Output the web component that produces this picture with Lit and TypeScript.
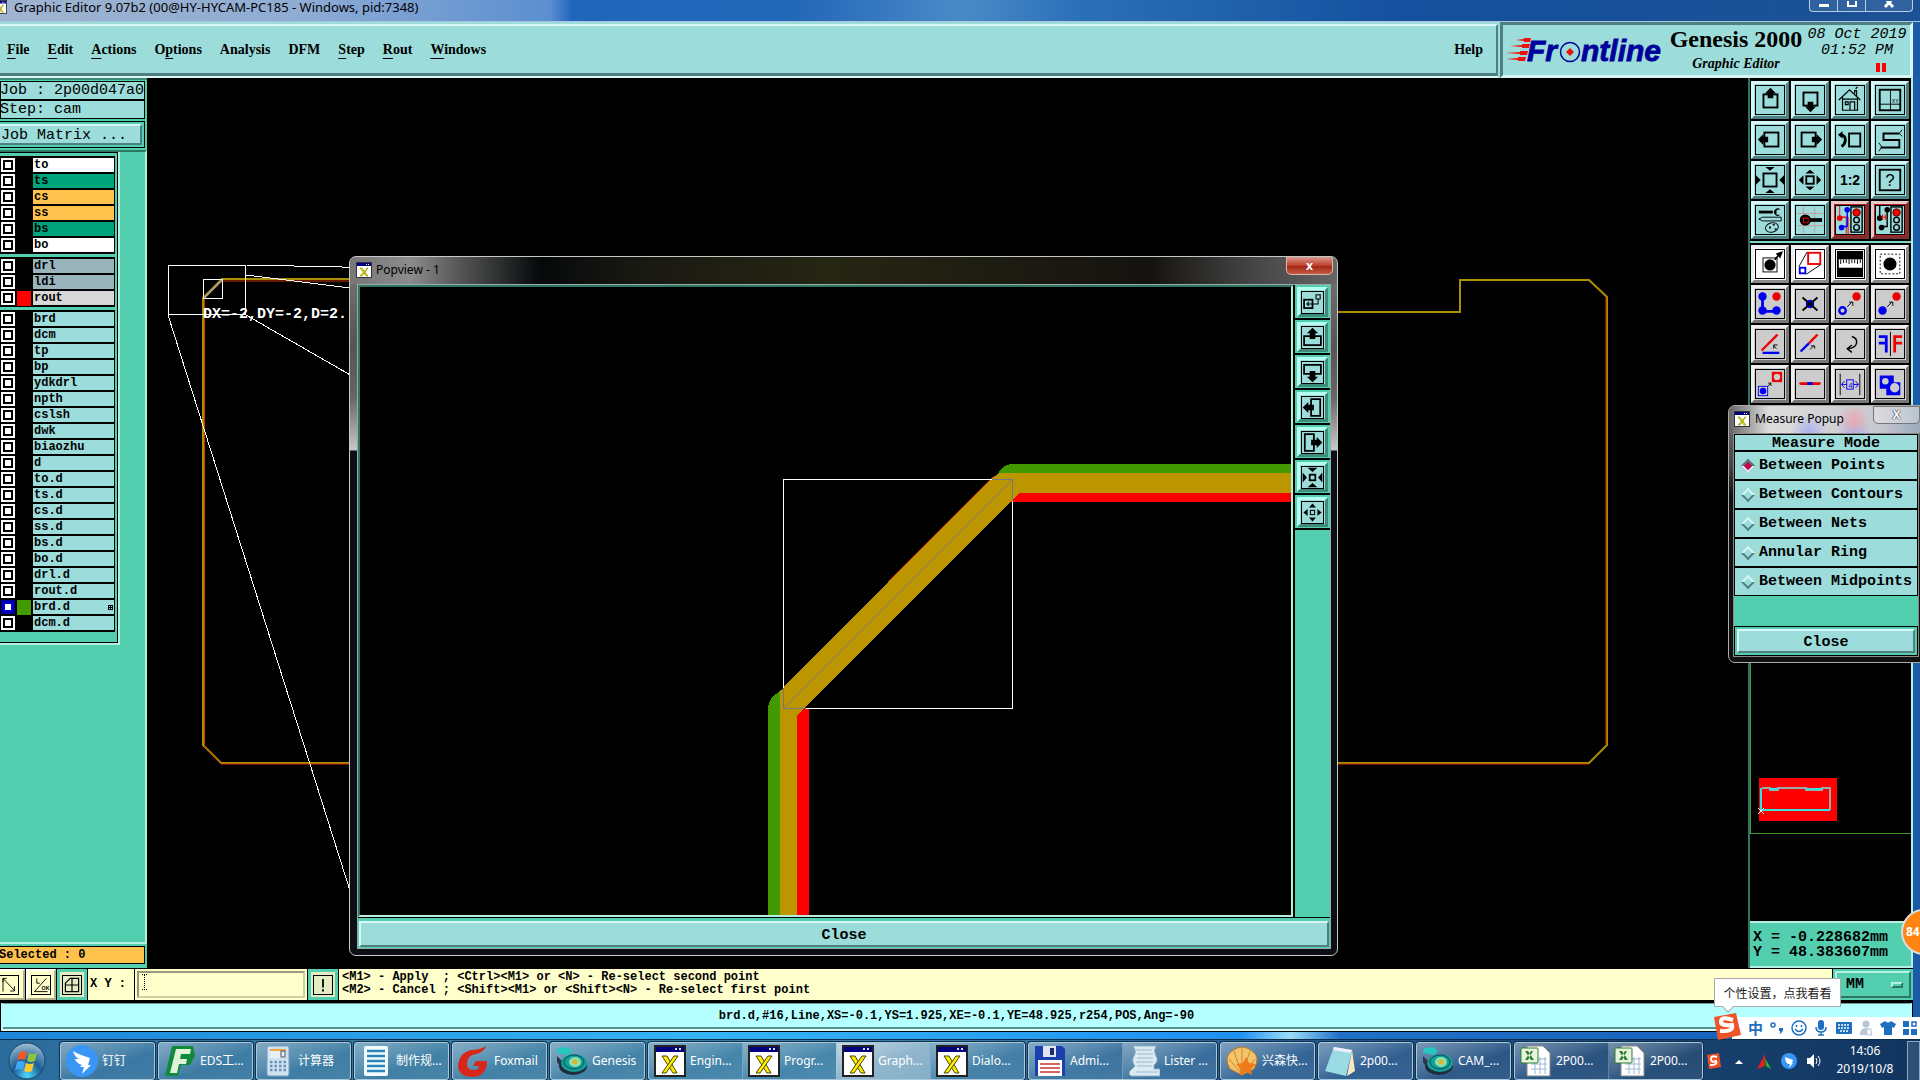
import { LitElement, html, svg, css, nothing } from "lit";
import { customElement, state } from "lit/decorators.js";
import { classMap } from "lit/directives/class-map.js";

const BLUE = "#0000f0";
const RED = "#f00000";

/* ---------- tool glyphs, all on a 30 x 30 grid ---------- */
const glyphs: Record<string, unknown> = {
  up: svg`<rect x="8" y="9" width="15" height="14" fill="none" stroke="#000" stroke-width="2"/><path d="M15.500 2l6 6h-3v5h-6v-5h-3z"/>`,
  down: svg`<rect x="8" y="7" width="15" height="14" fill="none" stroke="#000" stroke-width="2"/><path d="M15.500 28l6-6h-3v-5h-6v5h-3z"/>`,
  left: svg`<rect x="9" y="7" width="15" height="15" fill="none" stroke="#000" stroke-width="2"/><path d="M2 14.500l6-6v3h5v6h-5v3z"/>`,
  right: svg`<rect x="6" y="7" width="15" height="15" fill="none" stroke="#000" stroke-width="2"/><path d="M28 14.500l-6-6v3h-5v6h5v3z"/>`,
  home: svg`<path d="M3 15L14.500 4 26 15M7 12v14h16V12M7 14h16M15 26v-9h5v9M10 17h3v3h-3zM20 8V5h2v6M21 3l2-2" fill="none" stroke="#000" stroke-width="1.300"/>`,
  grid: svg`<rect x="4" y="4" width="22" height="22" fill="none" stroke="#000" stroke-width="2"/><path d="M15.500 4v22M4 19.500h22" stroke="#000" fill="none"/><text x="17" y="18" font-size="6" font-family="Liberation Mono">XY</text>`,
  undo: svg`<rect x="14" y="8" width="12" height="14" fill="none" stroke="#000" stroke-width="2"/><path d="M4 10q6-1 6 5 0 4-4 7" fill="none" stroke="#000" stroke-width="3"/><path d="M2 9.500l5-4v8z"/>`,
  snake: svg`<path d="M25 8H8v7h17v8H5" fill="none" stroke="#000" stroke-width="2"/><path d="M25 8l3-4M25 8l3 3M6 22l-3-4M6 23l-3 4" stroke="#000"/>`,
  fitIn: svg`<rect x="8" y="8" width="14" height="14" fill="none" stroke="#000" stroke-width="2"/><path d="M10 1h10l-5 4zM10 29h10l-5-4zM0 10v10l5-5zM30 10v10l-5-5z"/>`,
  fitOut: svg`<rect x="11" y="11" width="8" height="8" fill="none" stroke="#000" stroke-width="2"/><path d="M10 8h10l-5-4zM10 22h10l-5 4zM8 10v10l-5-5zM22 10v10l5-5z"/>`,
  ratio: svg`<text x="15" y="20" text-anchor="middle" font-size="15" font-weight="bold" font-family="Liberation Sans">1:2</text>`,
  help: svg`<rect x="4" y="4" width="22" height="22" fill="none" stroke="#000" stroke-width="2"/><text x="15" y="21" text-anchor="middle" font-size="18" font-family="Liberation Sans">?</text>`,
  tools: svg`<path d="M3 5h15v3H3z"/><path d="M26 3.500a4 4 0 1 0 0 6h-4v-5z"/><path d="M3 14l4-2h20v4H7z" fill="none" stroke="#000"/><ellipse cx="17" cy="23" rx="7" ry="5" transform="rotate(-15 17 23)" fill="none" stroke="#000"/><path d="M14 22h2v2h-2zM18 19h2v2h-2zM20 24h2v2h-2z"/>`,
  probe: svg`<path d="M8 1v28M20 1v28M1 8h28M1 21h28" stroke="#c99" /><circle cx="10" cy="15" r="6"/><path d="M14 13h14v4H14z"/><rect x="8" y="13" width="5" height="5" fill="none" stroke="${RED}"/>`,
  netA: svg`<path d="M4 0v12h7v18M4 12h9v18" stroke="${RED}" fill="none"/><path d="M12 3v19H6" stroke="${BLUE}" stroke-width="1.500" fill="none"/><circle cx="12" cy="4" r="3" fill="${BLUE}"/><circle cx="4" cy="13" r="3" fill="${RED}"/><circle cx="6" cy="23" r="3" fill="${BLUE}"/><rect x="16" y="1" width="12" height="27" fill="none" stroke="#000" stroke-width="1.500"/><circle cx="22" cy="7" r="4" fill="${RED}" stroke="#600"/><circle cx="22" cy="15" r="3" fill="none" stroke="#000" stroke-width="1.500"/><circle cx="22" cy="23" r="3" fill="none" stroke="#000" stroke-width="1.500"/>`,
  netB: svg`<path d="M4 0v13M12 4v18H6" stroke="#000" fill="none" stroke-width="1.500"/><circle cx="12" cy="4" r="3"/><circle cx="4" cy="13" r="3"/><circle cx="6" cy="23" r="3"/><path d="M5 12h7M7 9v6M10 9v6" stroke="${RED}" fill="none"/><rect x="16" y="1" width="12" height="27" fill="none" stroke="#000" stroke-width="1.500"/><circle cx="22" cy="7" r="4" fill="${RED}" stroke="#600"/><circle cx="22" cy="15" r="3" fill="none" stroke="#000" stroke-width="1.500"/><circle cx="22" cy="23" r="3" fill="none" stroke="#000" stroke-width="1.500"/>`,
  select: svg`<rect x="7.500" y="8.500" width="15" height="15" fill="none" stroke="#000"/><circle cx="15" cy="16" r="6"/><path d="M19 10l4-4-2-2 8-3-3 8-2-2-3 4z"/>`,
  scale: svg`<rect x="13" y="3" width="13" height="12" fill="none" stroke="${RED}" stroke-width="2"/><rect x="4" y="19" width="6" height="6" fill="none" stroke="${BLUE}" stroke-width="2"/><path d="M3 18L12 2M11 26l15-10" stroke="#000"/>`,
  ruler: svg`<rect x="1" y="1" width="28" height="28"/><rect x="3" y="10" width="25" height="9" fill="#fff"/><path d="M5 10v5M8 10v4M11 10v4M14 10v5M17 10v4M20 10v4M23 10v5M26 10v4" stroke="#000"/>`,
  area: svg`<circle cx="15" cy="15" r="7"/><rect x="4.500" y="4.500" width="21" height="21" fill="none" stroke="#000" stroke-dasharray="2 2"/>`,
  pads: svg`<path d="M7 7v16h15" fill="none" stroke="${BLUE}" stroke-width="3"/><circle cx="7" cy="7" r="4.500" fill="${BLUE}"/><circle cx="7" cy="22" r="4.500" fill="${BLUE}"/><circle cx="22" cy="22" r="4.500" fill="${BLUE}"/><circle cx="22" cy="7" r="4.500" fill="${RED}"/>`,
  cross: svg`<circle cx="15" cy="15" r="4.500" fill="${BLUE}"/><path d="M7 8l16 14M23 8L7 22" stroke="#000" stroke-width="2"/>`,
  moveA: svg`<circle cx="7" cy="22" r="3.500" fill="none" stroke="${BLUE}" stroke-width="2.500"/><circle cx="22" cy="7" r="4.500" fill="${RED}"/><path d="M12 18l5-5M14 13h4v4" stroke="#000" fill="none"/>`,
  moveB: svg`<circle cx="7" cy="22" r="4.500" fill="${BLUE}"/><circle cx="22" cy="7" r="4.500" fill="${RED}"/><path d="M12 18l5-5M14 13h4v4" stroke="#000" fill="none"/>`,
  angle: svg`<path d="M6 22L23 5" stroke="${RED}" stroke-width="2.500"/><path d="M7 24.500h18" stroke="${BLUE}" stroke-width="2.500"/><path d="M22 20l-3-3M19 20v-4h4" stroke="#000" fill="none"/>`,
  extend: svg`<path d="M14 14l9-9" stroke="${RED}" stroke-width="2.500"/><path d="M5 23l9-9" stroke="${BLUE}" stroke-width="2.500"/><path d="M15 21l4-4M16 17h4v3" stroke="#000" fill="none"/>`,
  rotate: svg`<path d="M17 7q6 2 5 7-1 5-9 6M17 16l-5 4 5 4" stroke="#000" stroke-width="1.500" fill="none"/>`,
  mirror: svg`<path d="M3 7h8v17M3 14h8" stroke="${BLUE}" stroke-width="3" fill="none"/><path d="M28 7h-8v17M28 14h-8" stroke="${RED}" stroke-width="3" fill="none"/><path d="M15.500 2v26" stroke="#000"/>`,
  copy: svg`<rect x="2.500" y="17.500" width="10" height="10" fill="none" stroke="${BLUE}"/><circle cx="7.500" cy="22.500" r="3.500" fill="${BLUE}"/><rect x="17" y="2" width="11" height="11" fill="${RED}"/><circle cx="22.500" cy="7.500" r="3.500" fill="#ccc"/><path d="M13 17l3-3M13 14h3v3" stroke="#000" fill="none"/>`,
  bar: svg`<path d="M5 14.500h20" stroke="${RED}" stroke-width="3" stroke-linecap="round"/><path d="M12 14.500h6" stroke="${BLUE}" stroke-width="3"/>`,
  spacing: svg`<path d="M4.500 4v23M25.500 4v23" stroke="#000"/><path d="M6 15.500h18M9 12l-3 3.500 3 3.500M21 12l3 3.500-3 3.500" stroke="${BLUE}" fill="none"/><rect x="11.500" y="10.500" width="7" height="10" fill="#ccc" stroke="${BLUE}"/><text x="13" y="19" font-size="8" fill="${BLUE}" font-family="Liberation Sans">4</text>`,
  merge: svg`<path d="M4 6h15v7h7v14H11v-7H4z" fill="${BLUE}"/><circle cx="10" cy="12" r="3.500" fill="#ccc"/><circle cx="20" cy="19" r="5" fill="#ccc"/>`,
  popLink: svg`<rect x="3" y="11" width="12" height="12" fill="none" stroke="#000" stroke-width="2.500"/><rect x="20" y="4" width="6" height="6" fill="none" stroke="#000" stroke-width="1.500"/><path d="M7 17h16v-7M10 14l-3 3 3 3" stroke="#000" stroke-width="1.500" fill="none"/>`,
  popUp: svg`<path d="M12 13H3v13h24V13h-9" fill="none" stroke="#000" stroke-width="2.500"/><path d="M15 1l8 8h-4v8h-8V9H7z"/>`,
  popDown: svg`<path d="M12 17H3V4h24v13h-9" fill="none" stroke="#000" stroke-width="2.500"/><path d="M15 29l8-8h-4v-8h-8v8H7z"/>`,
  popLeft: svg`<path d="M13 12V3h13v24H13v-9" fill="none" stroke="#000" stroke-width="2.500"/><path d="M1 15l8-8v4h8v8H9v4z"/>`,
  popRight: svg`<path d="M17 12V3H4v24h13v-9" fill="none" stroke="#000" stroke-width="2.500"/><path d="M29 15l-8-8v4h-8v8h8v4z"/>`,
  popIn: svg`<rect x="11" y="11" width="8" height="8" fill="none" stroke="#000" stroke-width="2.500"/><path d="M8 1h14l-7 6zM8 29h14l-7-6zM1 8v14l6-7zM29 8v14l-6-7z"/>`,
  popOut: svg`<rect x="12" y="12" width="6" height="6" fill="none" stroke="#000" stroke-width="1.500"/><path d="M10 8h10l-5-6zM10 22h10l-5 6zM8 10v10l-6-5zM22 10v10l6-5z"/>`,
  arrow2: svg`<path d="M5 4v22M5 4h6M6 5l18 19M24 17v8h-7M5 4v6" fill="none" stroke="#000" stroke-width="1.500"/>`,
  angleOk: svg`<path d="M4 26h22M4 26L24 4M8 4v8h5" fill="none" stroke="#000" stroke-width="1.500"/><text x="16" y="24" font-size="9" font-family="Liberation Sans">OK</text>`,
  window: svg`<path d="M4 12L12 4h14v22H4zM4 15h22M15 4v22" fill="none" stroke="#000" stroke-width="2"/>`,
  alert: svg`<path d="M15 5v14M15 22v4" stroke="#000" stroke-width="3"/>`,
};

const glyph = (name: string) =>
  html`<svg class="glyph" viewBox="0 0 30 30" aria-hidden="true">${glyphs[name]}</svg>`;

const xIcon = html`<svg class="xicon" viewBox="0 0 16 16" aria-hidden="true">
  <rect x="0.500" y="0.500" width="15" height="15" fill="#fff" stroke="#333" />
  <rect x="1" y="1" width="14" height="3" fill="#000080" /><path d="M10 2h1v1h-1zM12 2h1v1h-1z" fill="#fff" />
  <path d="M4 6h2l6 8h-2z" fill="#ee0" stroke="#660" stroke-width="0.500" /><path d="M12 6h-1l-7 8h2z" fill="#ee0" stroke="#660" stroke-width="0.500" />
</svg>`;

const upperTools = [
  "up", "down", "home", "grid", "left", "right", "undo", "snake",
  "fitIn", "fitOut", "ratio", "help", "tools", "probe", "netA", "netB",
];
const lowerTools = [
  "select", "scale", "ruler", "area", "pads", "cross", "moveA", "moveB",
  "angle", "extend", "rotate", "mirror", "copy", "bar", "spacing", "merge",
];

interface Layer { name: string; tone: string; swatch?: string; active?: boolean }
const layerGroups: Layer[][] = [
  [
    { name: "to", tone: "white" }, { name: "ts", tone: "green" }, { name: "cs", tone: "amber" },
    { name: "ss", tone: "amber" }, { name: "bs", tone: "green" }, { name: "bo", tone: "white" },
  ],
  [
    { name: "drl", tone: "slate" }, { name: "ldi", tone: "slate" }, { name: "rout", tone: "silver", swatch: "red" },
  ],
  [
    "brd", "dcm", "tp", "bp", "ydkdrl", "npth", "cslsh", "dwk", "biaozhu", "d", "to.d", "ts.d", "cs.d",
    "ss.d", "bs.d", "bo.d", "drl.d", "rout.d", "brd.d", "dcm.d",
  ].map((name) => ({
    name, tone: "aqua", swatch: name === "brd.d" ? "lime" : undefined, active: name === "brd.d",
  })),
];

/* ---------- taskbar pictures, 32 x 32 grid ---------- */
const appIcons: Record<string, unknown> = {
  ding: svg`<circle cx="16" cy="16" r="16" fill="#3a96f4"/><path d="M7 6q4 3 17 7l-2 7h3l-9 9 2-7h-4l2-2q-6-2-7-6l4 0q-5-3-6-8z" fill="#fff"/>`,
  eds: svg`<path d="M8 1h21l2 10-5 9H17l-3 11H1z" fill="#118a3c"/><path d="M12 4h15l-1 5h-9l-1 5h7l-1 5h-7l-2 9H6z" fill="#dff3d8"/>`,
  calc: svg`<rect x="5" y="1" width="22" height="30" rx="2" fill="#cfe2f2" stroke="#7d9ab5"/><rect x="8" y="4" width="16" height="9" fill="#e8eef4"/><path d="M8 5h16" stroke="#f4a63b" stroke-width="2"/><rect x="19" y="6" width="4" height="6" fill="none" stroke="#456"/><path d="M8 17h16M8 21h16M8 25h16" stroke="#6a8fb8" stroke-width="2.500" stroke-dasharray="2.500 2"/>`,
  note: svg`<rect x="4" y="1" width="24" height="30" rx="2" fill="#f4fbff"/><path d="M7 6h18M7 11h18M7 16h18M7 21h18M7 26h18" stroke="#2a86b8" stroke-width="2.500"/>`,
  fox: svg`<path d="M28 1q-2 7-14 9-5 3-5 9 0 6 7 6 5 0 5-4h-6l3-5h11q0 15-14 16-14 0-15-11Q1 8 13 5q9 0 15-4z" fill="#d9261a"/>`,
  genesis: svg`<ellipse cx="17" cy="21" rx="14" ry="9" fill="#222b3a"/><ellipse cx="18" cy="18" rx="13" ry="9" fill="#12a098"/><ellipse cx="18" cy="17" rx="10" ry="7" fill="none" stroke="#064f58"/><ellipse cx="19" cy="17" rx="6" ry="5" fill="#8be0b0"/><circle cx="19" cy="17" r="2.500" fill="#e2b227"/><path d="M2 3l9-1 5 4-4 4-11-2z" fill="#25c8c0"/><path d="M1 11l5 5-3 4-2-3z" fill="#334"/>`,
  xwin: svg`<rect x="1" y="1" width="30" height="30" fill="#fff" stroke="#222" stroke-width="2"/><rect x="2" y="2" width="28" height="5" fill="#000080"/><path d="M21 3h2v2h-2zM25 3h2v2h-2z" fill="#ddd"/><path d="M8 11h5l10 17h-4z" fill="#fe0" stroke="#440"/><path d="M24 11h-4L8 28h4z" fill="#fe0" stroke="#440"/>`,
  floppy: svg`<path d="M1 1h27l3 3v27H1z" fill="#1c3fb0"/><rect x="9" y="1" width="13" height="11" fill="#dfe5ef"/><rect x="16" y="3" width="4" height="7" fill="#1c2a70"/><rect x="4" y="15" width="24" height="16" fill="#fff"/><path d="M6 19h20M6 23h20M6 27h20" stroke="#c33" stroke-width="1.500"/>`,
  scroll: svg`<path d="M5 1h23q-3 5 0 10t-2 9v4h6v7H3q-4-3 1-7l3-3q-4-5-1-10t-1-10z" fill="#dcebf3" stroke="#8fb0c4"/><path d="M8 5h16M9 9h16M9 13h16M8 17h17M9 21h15M8 27h22" stroke="#98b9cc"/>`,
  shell: svg`<path d="M16 30L4 24Q-3 12 6 6q10-8 20 0 9 6 2 18z" fill="#f4c46a" stroke="#b9762a"/><path d="M16 30L8 6M16 30L16 3M16 30L24 6M16 30L3 14M16 30L29 14" stroke="#c98a35"/><path d="M20 12l3 6 7 1-5 5 1 6-6-3-6 3 1-6-5-5 7-1z" fill="#ef7a1c"/>`,
  pad: svg`<path d="M28 5l3 21-8 5z" fill="#f4e9c0"/><path d="M10 2l18 3-6 26L1 26z" fill="#9adbe4"/><path d="M10 2l18 3-1 3L9 5z" fill="#eef"/>`,
  excel: svg`<path d="M7 1h16l7 7v23H7z" fill="#fff" stroke="#888"/><path d="M11 14h16M11 19h16M11 24h16M15 12v17M20 12v17M25 12v17" stroke="#9ab6d8"/><rect x="1" y="3" width="17" height="15" rx="1" fill="#e6f4dc" stroke="#2f7d32"/><path d="M5 6h3l6 9h-3zM13 6h-2l-6 9h3z" fill="#2a7d2e"/>`,
};

interface Task { icon: string; label: string; current?: boolean }
const taskGroups: Task[][] = [
  [{ icon: "ding", label: "钉钉" }],
  [{ icon: "eds", label: "EDS工..." }],
  [{ icon: "calc", label: "计算器" }],
  [{ icon: "note", label: "制作规..." }],
  [{ icon: "fox", label: "Foxmail" }],
  [{ icon: "genesis", label: "Genesis" }],
  [
    { icon: "xwin", label: "Engin..." }, { icon: "xwin", label: "Progr..." },
    { icon: "xwin", label: "Graph...", current: true }, { icon: "xwin", label: "Dialo..." },
  ],
  [{ icon: "floppy", label: "Admi..." }, { icon: "scroll", label: "Lister ..." }],
  [{ icon: "shell", label: "兴森快..." }],
  [{ icon: "pad", label: "2p00..." }],
  [{ icon: "genesis", label: "CAM_..." }],
  [{ icon: "excel", label: "2P00..." }, { icon: "excel", label: "2P00..." }],
];

const base = css`
  :host { display: block; box-sizing: border-box; }
  *, *::before, *::after { box-sizing: border-box; }
  button, input, select { font: inherit; color: inherit; margin: 0; padding: 0; border-radius: 0; }
  .glyph { display: block; width: 100%; height: 100%; }
  .xicon { width: 16px; height: 16px; flex: none; }
  .mono { font: bold 15px/15px "Liberation Mono", monospace; }
`;

@customElement("menu-header")
class MenuHeader extends LitElement {
  static styles = [base, css`
    :host { display: flex; height: 56px; color: #000; background: #9cdcda; }
    .menu { flex: 1; display: flex; align-items: center; justify-content: space-between; padding: 0 13px 0 7px;
      border: 2px solid; border-color: #d8f6f6 #4f7f80 #4f7f80 #9cdcda; border-left-width: 0; border-bottom-width: 3px;
      box-shadow: 0 2px #d8f6f6; margin-bottom: 2px; margin-top: 2px;
      font: bold 14px/20px "Liberation Serif", serif; }
    .items { display: flex; gap: 18px; }
    .menu button { border: 0; background: none; white-space: pre; }
    u { text-underline-offset: 4px; text-decoration-thickness: 1px; }
    .brand { display: flex; width: 413px; border: 3px solid; border-color: #4f7f80 #d8f6f6 #d8f6f6 #4f7f80;
      margin-left: 2px; padding-left: 3px; }
    .logo { width: 162px; height: 50px; flex: none; }
    .product { display: flex; flex-direction: column; align-items: center; width: 136px; white-space: nowrap; }
    .product strong { font: bold 24px/28px "Liberation Serif", serif; }
    .product em { font: italic bold 14px/22px "Liberation Serif", serif; }
    .clock { flex: 1; display: flex; flex-direction: column; align-items: center; padding-top: 2px;
      font: italic 15px/16px "Liberation Mono", monospace; white-space: pre; }
    .pause { width: 10px; height: 9px; border: solid #f00; border-width: 0 4px; margin: 4px 0 0 48px; }
  `];
  render() {
    const items: [string, string, string][] = [
      ["", "F", "ile"], ["", "E", "dit"], ["", "A", "ctions"], ["O", "p", "tions"], ["Analysis", "", ""],
      ["DFM", "", ""], ["", "S", "tep"], ["", "R", "out"], ["", "W", "indows"],
    ];
    return html`
      <nav class="menu">
        <div class="items">
          ${items.map(([a, k, b]) => html`<button type="button">${a}${k ? html`<u>${k}</u>` : nothing}${b}</button>`)}
        </div>
        <button type="button">Help</button>
      </nav>
      <div class="brand">
        <svg class="logo" viewBox="0 0 162 50" role="img" aria-label="Frontline">
          <path d="M10 15l8-1v-1h7l-1 4h-6v-1zM4 21l12-1v-1h8l-1 4h-7v-1zM0 28l14-1v-1h8l-1 4h-7v-1zM0 34l12-1v-1h8l-1 4h-7v-1z" fill="#f01010" />
          <g font-family="Liberation Sans" font-weight="bold" font-style="italic" font-size="30" fill="#00009a" stroke="#00009a" stroke-width="0.800">
            <text x="21" y="36">Fr</text><text x="75" y="36">ntline</text>
          </g>
          <circle cx="64" cy="27" r="9.500" fill="#9cdcda" stroke="#00009a" stroke-width="1.500" />
          <path d="M64 23l4 4-4 4-4-4z" fill="#f01010" />
        </svg>
        <div class="product"><strong>Genesis 2000</strong><em>Graphic Editor</em></div>
        <div class="clock"><span>08 Oct 2019</span><span>01:52 PM</span><i class="pause"></i></div>
      </div>`;
  }
}

@customElement("layer-panel")
class LayerPanel extends LitElement {
  static styles = [base, css`
    :host { display: flex; flex-direction: column; width: 147px; background: #53cfb0; color: #000; }
    .info { border: 1px solid #000; background: #9cdcda; height: 19px; margin-right: 2px; line-height: 18px; white-space: pre; text-indent: -1px; overflow: hidden; }
    .head { border-top: 2px solid #3a8a76; background: #53cfb0; padding-top: 1px; font-weight: normal; }
    .matrix { margin: 2px 2px 2px 0; border: 1px solid #000; border-left: 0; height: 27px; padding: 2px 2px 2px 0; }
    .matrix button { width: 100%; height: 100%; background: #9cdcda; border: 2px solid; border-left: 0;
      border-color: #d8f6f6 #4f7f80 #4f7f80; text-align: left; padding: 2px 0 0 1px; }
    .body { flex: 1; border-right: 2px solid #b4efe0; border-bottom: 2px solid #b4efe0; border-top: 2px solid #2e7564; }
    .list { width: 120px; border-right: 2px solid #b4efe0; border-bottom: 2px solid #b4efe0; }
    .inner { display: flex; flex-direction: column; gap: 3px; padding: 3px 2px 10px 0; border: solid #000; border-width: 1px 1px 1px 0; }
    .group { background: #000; padding: 1px 0 1px 1px; }
    .row { display: grid; grid-template-columns: 14px 14px 81px; gap: 2px; height: 16px; padding-top: 1px;
      font: bold 12px/14px "Liberation Mono", monospace; }
    input { appearance: none; width: 14px; height: 14px; border: 2px solid #fff; background: #fff; box-shadow: inset 0 0 0 2px #000; }
    .active input { border-color: #0000a0; box-shadow: inset 0 0 0 2px #0000d0; }
    .name { display: flex; justify-content: space-between; align-items: center; height: 14px; padding: 0 1px; background: #9cdcda; }
    .white { background: #fff; } .green { background: #00a47c; } .amber { background: #ffc34d; }
    .slate { background: #9ab4bc; } .silver { background: #d8d8d8; }
    .red { background: #f00; } .lime { background: #429a00; }
    .mark { width: 5px; height: 5px; }
    .foot { padding: 2px 2px 4px 0; background: #53cfb0; }
    .sel { border: 1px solid #000; border-left: 0; background: #ffc34d; height: 18px; text-indent: -1px;
      font: bold 12px/16px "Liberation Mono", monospace; white-space: pre; }
  `];
  render() {
    return html`
      <div class="head mono">
        <div class="info">Job : 2p00d047a0</div>
        <div class="info">Step: cam</div>
        <div class="matrix"><button type="button">Job Matrix ...</button></div>
      </div>
      <div class="body"><div class="list"><div class="inner">
        ${layerGroups.map((g) => html`<div class="group">${g.map((l) => html`
          <label class=${classMap({ row: true, active: !!l.active })}>
            <input type="checkbox" .checked=${!!l.active} />
            <i class=${l.swatch ?? ""}></i>
            <span class="name ${l.tone}">${l.name}${l.active
              ? html`<svg class="mark" viewBox="0 0 5 5" shape-rendering="crispEdges"><path d="M0 0h5v5H0zM1 1v1h1V1zM3 1v1h1V1zM1 3v1h1V3zM3 3v1h1V3z" fill-rule="evenodd" /></svg>`
              : nothing}</span>
          </label>`)}</div>`)}
      </div></div></div>
      <div class="foot"><div class="sel">Selected : 0</div></div>`;
  }
}

@customElement("tool-column")
class ToolColumn extends LitElement {
  static styles = [base, css`
    :host { display: flex; flex-direction: column; width: 165px; background: #000; border-left: 2px solid #2e7564; border-right: 2px solid #b4efe0; color: #000; }
    .tools { display: grid; grid-template-columns: repeat(4, 38px); gap: 2px; padding: 3px 0 2px 1px; }
    .tools.lower { padding-top: 2px; }
    .upper { border-bottom: 2px solid #7fd8c4; }
    .tool { width: 38px; height: 38px; padding: 1px; border: 3px solid; border-color: #d8f6f6 #4f7f80 #4f7f80 #d8f6f6; background: #9cdcda; }
    .box { display: block; width: 30px; height: 30px; border: 1px solid #000; }
    .lower .tool { background: #ccc; border-color: #eee #777 #777 #eee; }
    .lower .lit { background: #fff; border-color: #eee #888 #888 #eee; }
    .upper .hot { background: #b82020; border-color: #e8c8c8 #7f3030 #7f3030 #e8c8c8; }
    .hot .box { background: #9cdcda; }
    .map { flex: 1; }
    .map svg { display: block; width: 100%; height: 100%; }
    .coords { border: solid; border-width: 2px 0 2px; border-color: #b4efe0; background: #53cfb0; padding: 7px 0 6px 3px; white-space: pre; }
    .coords div { line-height: 15px; }
  `];
  render() {
    const tool = (n: string, cls: Record<string, boolean>) =>
      html`<button type="button" aria-label=${n} class=${classMap({ tool: true, ...cls })}><span class="box">${glyph(n)}</span></button>`;
    return html`
      <div class="tools upper">${upperTools.map((n, i) => tool(n, { hot: i > 13 }))}</div>
      <div class="tools lower">${lowerTools.map((n, i) => tool(n, { lit: i < 4 }))}</div>
      <div class="map">
        <svg viewBox="0 0 161 516" preserveAspectRatio="xMinYMin meet" shape-rendering="crispEdges">
          <path d="M0.500 0V428.500H161" fill="none" stroke="#429a30" />
          <rect x="9" y="373" width="78" height="43" fill="#f00" />
          <path d="M12 383h8v2h8v-2h28v2h16v-2h8v22" fill="none" stroke="#9aa" stroke-width="2" />
          <path d="M11 383v22h69M20 384h8M56 384h16" fill="none" stroke="#38e0e0" stroke-width="2" />
          <path d="M8 403l6 6M14 403l-6 6" stroke="#fff" />
        </svg>
      </div>
      <div class="coords mono"><div>X = -0.228682mm</div><div>Y = 48.383607mm</div></div>`;
  }
}

@customElement("pop-view")
class PopView extends LitElement {
  static styles = [base, css`
    :host { display: flex; flex-direction: column; width: 989px; height: 700px; padding: 0 6px 6px 7px; overflow: hidden;
      border: 1px solid #c8c8c8; border-radius: 7px; color: #000;
      background: linear-gradient(#777 0, #555 90px, #666 140px, #c8c8c8 193px, #0c1016 194px); }
    .title { display: flex; align-items: flex-start; gap: 4px; height: 27px; margin: 0 -6px 0 -7px; padding: 5px 4px 0 6px; border-radius: 6px 6px 0 0;
      background: linear-gradient(90deg, #777, #8c8c8c 60px, #555 110px, #05090a 190px, #181812 280px, #262614 480px, #15130f 800px, #444 900px, #666);
      font: 12px/16px "Noto Sans", "Noto Sans CJK SC", sans-serif; }
    .title span { flex: 1; }
    .close { width: 47px; height: 19px; margin-top: -6px; border: 1px solid #d8b8b0; border-radius: 0 0 5px 5px; color: #fff;
      background: linear-gradient(#d89a90, #c0402c 50%, #a02818 55%, #c85a40); font-weight: bold; line-height: 14px; }
    .client { flex: 1; display: flex; flex-direction: column; border: 1px solid #9aa; background: #000; min-height: 0; }
    .view { flex: 1; display: flex; min-height: 0; }
    .canvas { flex: 1; border: 2px solid; border-color: #2e7564 #b4efe0 #b4efe0 #2e7564; min-width: 0; }
    .canvas svg { display: block; width: 100%; height: 100%; }
    .side { width: 35px; margin-left: 2px; background: #53cfb0; }
    .cell { border-bottom: 2px solid #000; height: 35px; padding: 2px 0 0 2px; }
    .cell button { display: block; width: 31px; height: 30px; padding: 1px 1px 0; border: 3px solid; background: #9cdcda; border-color: #b4fff0 #3d8c7c #3d8c7c #b4fff0; }
    .box { display: block; width: 23px; height: 23px; border: 1px solid #000; }
    .foot { padding: 3px 1px 1px 1px; background: #53cfb0; margin-top: 1px; }
    .foot button { display: block; width: 100%; height: 26px; padding-top: 2px; background: #9cdcda; border: 2px solid; border-color: #d8f6f6 #4f7f80 #4f7f80 #d8f6f6; }
  `];
  render() {
    return html`
      <div class="title">${xIcon}<span>Popview - 1</span><button class="close" type="button" aria-label="Close window">x</button></div>
      <div class="client">
        <div class="view">
          <div class="canvas">
            <svg viewBox="360 287 931 628" preserveAspectRatio="xMinYMin slice" shape-rendering="crispEdges">
              <path d="M768 916V710q0-11 8-16l10-8 8 20v210z" fill="#429a00" />
              <path d="M1292 464H1013q-9 0-14 8l-6 8 20 10h279z" fill="#429a00" />
              <path d="M797 916V708h12V916zM1006 502V493h286v9z" fill="#f00" />
              <path d="M780 916V692L783 688 992 478 1000 473H1292v20H1019L797 715V916z" fill="#bc9600" />
              <path d="M888 582L993 477" stroke="#e03000" />
              <rect x="783.500" y="479.500" width="229" height="229" fill="none" stroke="#fff" />
              <path d="M783.500 688v20.500h22M992 479.500h20.500V501M783.500 708.500l229-229" fill="none" stroke="#77777f" />
            </svg>
          </div>
          <div class="side">
            ${["popLink", "popUp", "popDown", "popLeft", "popRight", "popIn", "popOut"].map((n) => html`
              <div class="cell"><button type="button" aria-label=${n}><span class="box">${glyph(n)}</span></button></div>`)}
          </div>
        </div>
        <div class="foot mono"><button type="button">Close</button></div>
      </div>`;
  }
}

@customElement("measure-popup")
class MeasurePopup extends LitElement {
  @state() private mode = 0;
  static styles = [base, css`
    :host { display: flex; flex-direction: column; width: 193px; height: 258px; padding: 0 1px 5px 4px; color: #000;
      border: 1px solid #aaa; border-radius: 7px 0 0 7px;
      background: linear-gradient(#777 0, #444 60px, #111 90px, #111); }
    .title { display: flex; gap: 5px; height: 27px; margin: 0 -1px 0 -4px; padding: 5px 0 0 5px; border-radius: 6px 0 0;
      background: radial-gradient(circle at 80px 26px, #a8b0f0 0, transparent 18px), radial-gradient(circle at 125px 14px, #e8a8b0 0, transparent 16px),
        radial-gradient(circle at 125px 28px, #a8b0f0 0, transparent 18px), linear-gradient(90deg, #666, #ddd 40px, #c8c8d0 150px, #9ab);
      font: 12px/16px "Noto Sans", sans-serif; white-space: nowrap; }
    .title span { flex: 1; }
    .x { width: 47px; height: 18px; margin-top: -5px; border: 1px solid #777; border-radius: 0 0 5px 5px; background: #ffffff50; color: #fff; font-weight: bold; line-height: 14px; text-shadow: 0 0 1px #000, 0 0 1px #000; }
    .client { flex: 1; display: flex; flex-direction: column; border: 1px solid #888; background: #53cfb0; }
    .list { background: #000; padding: 1px; margin: 0; border: 0; display: flex; flex-direction: column; gap: 2px; }
    .head { background: #9cdcda; text-align: center; height: 15px; line-height: 17px; }
    label { display: flex; align-items: center; gap: 6px; height: 27px; padding-left: 8px; background: #9cdcda; white-space: pre; }
    input { appearance: none; flex: none; width: 10px; height: 10px; transform: rotate(45deg); border: 2px solid;
      border-color: #d8f6f6 #4f7f80 #4f7f80 #d8f6f6; }
    input:checked { background: #c00850; border-color: #4f7f80 #d8f6f6 #d8f6f6 #4f7f80; }
    .foot { margin-top: auto; border: 1px solid #000; padding: 2px; }
    .foot button { display: block; width: 100%; height: 24px; padding-top: 2px; background: #9cdcda; border: 2px solid; border-color: #d8f6f6 #4f7f80 #4f7f80 #d8f6f6; }
  `];
  render() {
    const modes = ["Between Points", "Between Contours", "Between Nets", "Annular Ring", "Between Midpoints"];
    return html`
      <div class="title">${xIcon}<span>Measure Popup</span><button class="x" type="button" aria-label="Close window">X</button></div>
      <div class="client mono">
        <div class="list" role="radiogroup" aria-label="Measure Mode">
          <div class="head">Measure Mode</div>
          ${modes.map((m, i) => html`<label><input type="radio" name="mode" .checked=${this.mode === i} @change=${() => (this.mode = i)} />${m}</label>`)}
        </div>
        <div class="foot"><button type="button">Close</button></div>
      </div>`;
  }
}

@customElement("task-bar")
class TaskBar extends LitElement {
  static styles = [base, css`
    :host { display: flex; align-items: stretch; height: 42px; padding: 2px 0 1px; color: #fff; border-top: 1px solid #0c2c48;
      background: linear-gradient(90deg, #2a6c9c 0, #34789f 400px, #3c80a8 900px, #24568c 1350px, #17406c 1700px, #123560);
      font: 12px/16px "Noto Sans", "Noto Sans CJK SC", sans-serif; }
    .start { width: 60px; border: 0; background: none; padding: 0; }
    .start svg { display: block; width: 38px; height: 38px; margin-left: 8px; }
    .tasks { flex: 1; display: flex; gap: 3px; min-width: 0; }
    .group { display: flex; border: 1px solid #a9c8dc; border-radius: 3px; box-shadow: 0 0 0 1px #10304c; overflow: hidden; }
    .task { display: flex; align-items: center; gap: 4px; width: 93px; padding: 0 0 0 5px; border: 0; color: #fff;
      background: linear-gradient(160deg, #ffffff66, #ffffff30 40%, #ffffff10 60%, #ffffff18); white-space: nowrap; overflow: hidden; }
    .group .task + .task { border-left: 1px solid #ffffff40; width: 94px; }
    .task svg { width: 32px; height: 32px; flex: none; }
    .group .current { background: linear-gradient(160deg, #ffffffb0, #ffffff70 50%, #ffffff60); }
    .tray { display: flex; align-items: center; gap: 9px; }
    .tray svg { width: 16px; height: 18px; }
    .time { width: 84px; text-align: center; line-height: 18px; margin-left: 1px; }
    .desk { width: 13px; border: 1px solid #8aa8c0; background: #ffffff20; margin: -1px 0; }
  `];
  render() {
    return html`
      <button class="start" type="button" aria-label="Start">
        <svg viewBox="0 0 38 38"><defs><radialGradient id="o" cx="50%" cy="90%" r="90%"><stop offset="0" stop-color="#4fd8ff" /><stop offset="0.450" stop-color="#1b5c94" /><stop offset="1" stop-color="#9fc0d4" /></radialGradient></defs>
          <circle cx="19" cy="19" r="18" fill="url(#o)" stroke="#1a4468" />
          <path d="M11 11q4-3 8-1l-2 8q-4-2-8 0z" fill="#f0562a" /><path d="M21 11q4 2 8 0l-2 8q-4 2-8 0z" fill="#8cc63e" />
          <path d="M9 20q4-2 8 0l-2 8q-4-2-8 0z" fill="#3fa9f5" /><path d="M18 21q4 2 8 0l-2 8q-4 2-8 0z" fill="#fcc830" />
        </svg>
      </button>
      <div class="tasks">
        ${taskGroups.map((g) => html`<div class="group">${g.map((t) => html`
          <button type="button" class=${classMap({ task: true, current: !!t.current })}>
            <svg viewBox="0 0 32 32" aria-hidden="true">${appIcons[t.icon]}</svg>${t.label}
          </button>`)}</div>`)}
      </div>
      <div class="tray">
        <svg viewBox="0 0 16 18"><path d="M1 3l12-2 2 14-12 2z" fill="#f04e23" /><path d="M11 5Q5 3 5 7t5 2q2 4-6 4" stroke="#fff" stroke-width="2" fill="none" /></svg>
        <svg viewBox="0 0 16 18"><path d="M8 8l4 4H4z" fill="#fff" /></svg>
        <svg viewBox="0 0 16 18"><path d="M9 2v12L1 17z" fill="#e02020" /><path d="M9 6l6 11-5-3z" fill="#20c020" /></svg>
        <svg viewBox="0 0 16 18"><circle cx="8" cy="9" r="8" fill="#3a96f4" /><path d="M4 5l8 3-1 3h1l-4 5 1-4H7q-3-2-3-7z" fill="#fff" /></svg>
        <svg viewBox="0 0 16 18"><path d="M1 6h3l4-4v14l-4-4H1z" fill="#fff" /><path d="M10 6q2 3 0 6M12 4q4 5 0 10" stroke="#fff" fill="none" /></svg>
      </div>
      <div class="time"><div>14:06</div><div>2019/10/8</div></div>
      <button class="desk" type="button" aria-label="Show desktop"></button>`;
  }
}

@customElement("app-root")
class AppRoot extends LitElement {
  static styles = [base, css`
    :host { display: flex; flex-direction: column; position: relative; min-height: 100vh; overflow: hidden; background: #1a5aa6; color: #000; }
    .titlebar { display: flex; align-items: flex-start; gap: 7px; height: 22px; padding-left: 0; overflow: hidden; border-bottom: 1px solid #a9c4dc;
      background:
        radial-gradient(ellipse at 116px 18px, #a6c8b0 0, transparent 24px), radial-gradient(ellipse at 190px 18px, #b09ab8 0, transparent 24px),
        radial-gradient(ellipse at 265px 18px, #b09ab8 0, transparent 22px), radial-gradient(ellipse at 350px 18px, #d0d0b0 0, transparent 24px),
        radial-gradient(ellipse at 420px 18px, #c8e8f4 0, transparent 24px), radial-gradient(ellipse at 500px 18px, #9cc4e8 0, transparent 24px),
        radial-gradient(ellipse at 948px 18px, #b04850 0, transparent 14px), radial-gradient(ellipse at 1026px 18px, #2a2a30 0, transparent 14px),
        linear-gradient(90deg, #9fb4d0 0, #8facd4 300px, #5b8fd0 550px, #1f66bc 572px, #2468b8 800px, #4a8ac8 960px, #2a70b8 1080px, #14509e 1400px, #1c5294);
      font: 13px/16px "Noto Sans", sans-serif; }
    .titlebar .xicon { width: 14px; margin: -1px 0 0 -7px; }
    .titlebar span { flex: 1; line-height: 14px; }
    .controls { display: flex; margin-right: 7px; height: 12px; border: 1px solid #b8cce4; border-top: 0; border-radius: 0 0 4px 4px; }
    .controls button { width: 28px; border: 0; border-right: 1px solid #b8cce4; background: #ffffff18; padding: 0; }
    .controls button:last-child { width: 46px; border-right: 0; }
    .controls svg { display: block; margin: auto; width: 12px; height: 10px; }
    .frame { flex: 1; display: flex; flex-direction: column; margin-right: 7px; background: #000; }
    .work { flex: 1; display: flex; min-height: 0; }
    .canvas { flex: 1; min-width: 0; background: #000; }
    .canvas svg { display: block; width: 100%; height: 100%; }
    .command { display: flex; align-items: stretch; gap: 1px; height: 34px; border-bottom: 2px solid #000; background: #000; padding-top: 1px;
      font: bold 12px/13px "Liberation Mono", monospace; white-space: pre; }
    .mini { width: 30px; padding: 3px 2px; border: 2px solid; border-color: #fff #b0b090 #b0b090 #fff; background: #ffffcc; }
    .mini span { display: block; width: 20px; height: 20px; margin: auto; border: 1px solid #000; }
    .mini.first { width: 25px; border-left: 0; padding-left: 0; }
    .mini.first span { width: 19px; margin-left: 0; border-left: 0; }
    .mini.ringed { background: #e4ecc4; border: 3px solid #53cfb0; padding: 2px; }
    .xy { background: #ffffcc; width: 46px; padding: 9px 0 0 2px; }
    .entry { width: 172px; background: #ffffcc; padding: 2px; position: relative; }
    .entry input { width: 100%; height: 27px; background: #ffffcc; border: 2px solid; border-color: #98987c #d0d0a8 #d0d0a8 #98987c; padding: 0 6px; outline: 0; }
    .beam { position: absolute; left: 7px; top: 5px; width: 5px; height: 16px; }
    .msg { flex: 1; background: #ffffcc; padding: 2px 0 0 3px; }
    .unit { display: flex; width: 80px; background: #53cfb0; padding: 2px; position: relative; }
    .unit select { appearance: none; width: 100%; background: #53cfb0; border: 2px solid; border-color: #b4efe0 #2e7564 #2e7564 #b4efe0; padding-left: 9px; font-size: 15px; }
    .knob { position: absolute; right: 10px; top: 13px; width: 12px; height: 6px; border: 2px solid; border-color: #b4efe0 #2e7564 #2e7564 #b4efe0; pointer-events: none; }
    .status { display: flex; align-items: center; justify-content: center; height: 30px; background: #b4ffff; border: solid; border-color: #789a9a #b4ffff #d8ffff; border-width: 2px 3px 3px;
      outline: 1px solid #000; outline-offset: -1px; box-shadow: inset 0 -2px #5a9090; font: bold 12px/14px "Liberation Mono", monospace; padding-bottom: 1px; }
    .gap { height: 7px; background: linear-gradient(90deg, #1c86d8, #36b4f4 700px, #2090f0 1240px, #9cdcf8 1290px, #2070c8 1340px, #145cb8); }
    pop-view { position: absolute; left: 349px; top: 256px; }
    measure-popup { position: absolute; right: -1px; top: 405px; }
    .badge { position: absolute; right: -27px; top: 909px; width: 46px; height: 46px; border-radius: 50%; border: 2px solid #ddd; background: #ff8412;
      color: #fff; font: bold 12px/42px "Noto Sans", sans-serif; padding-left: 3px; }
    .tip { position: absolute; right: 79px; top: 978px; width: 127px; height: 29px; background: #fff; border: 1px solid #aaa; text-align: center;
      font: 12px/27px "Noto Sans CJK SC", sans-serif; color: #222; white-space: nowrap; }
    .tip::after { content: ""; position: absolute; left: 9px; bottom: -5px; width: 8px; height: 8px; background: #fff; border: solid #aaa; border-width: 0 1px 1px 0; transform: rotate(45deg); }
    .ime { position: absolute; right: 0; top: 1017px; width: 188px; height: 22px; background: #fff; display: flex; align-items: center; justify-content: space-between;
      padding: 0 2px 0 16px; color: #1e6fc0; font: bold 15px/20px "Noto Sans CJK SC", sans-serif; }
    .ime svg { width: 16px; height: 16px; }
    .sogou { position: absolute; right: 178px; top: 1012px; width: 29px; height: 29px; }
  `];
  render() {
    return html`
      <header class="titlebar">
        ${xIcon}<span>Graphic Editor 9.07b2 (00@HY-HYCAM-PC185 - Windows, pid:7348)</span>
        <div class="controls">
          <button type="button" aria-label="Minimize"><svg viewBox="0 0 12 10"><path d="M1 3h10v3H1z" fill="#fff" /></svg></button>
          <button type="button" aria-label="Maximize"><svg viewBox="0 0 12 10"><path d="M2-2h8v7H2z" fill="none" stroke="#fff" stroke-width="2" /></svg></button>
          <button type="button" aria-label="Close"><svg viewBox="0 0 12 10"><path d="M2-3l8 9M10-3L2 6" stroke="#fff" stroke-width="3" /></svg></button>
        </div>
      </header>
      <main class="frame">
        <menu-header></menu-header>
        <div class="work">
          <layer-panel></layer-panel>
          <div class="canvas">
            <svg viewBox="147 78 1601 889" preserveAspectRatio="xMinYMin meet">
              <g fill="none">
                <path d="M203 745V298L222 279H700V312H1460V280H1589L1607 297V745L1589 763H221Z" stroke="#a89000" stroke-width="2" />
                <path d="M204.500 745V298M222 281H700M1589 764H221L204 746M1606 297V745" stroke="#d03000" />
              </g>
              <g fill="none" stroke="#fff" shape-rendering="crispEdges">
                <rect x="168.500" y="265.500" width="77" height="49" /><rect x="203.500" y="279.500" width="19" height="19" />
                <path d="M246 265L1291 287M246 275L358 289M246 315L1291 916M168 315L358 916" />
              </g>
              <path d="M204 298L222 280" stroke="#a99a80" stroke-width="2" />
              <text x="203" y="318" fill="#fff" font-family="Liberation Mono" font-weight="bold" font-size="15">DX=-2,DY=-2,D=2.</text>
            </svg>
          </div>
          <tool-column></tool-column>
        </div>
        <div class="command">
          <button class="mini first" type="button" aria-label="Snap"><span>${glyph("arrow2")}</span></button>
          <button class="mini" type="button" aria-label="Angle"><span>${glyph("angleOk")}</span></button>
          <button class="mini ringed" type="button" aria-label="Grid"><span>${glyph("window")}</span></button>
          <label class="xy" for="xy">X Y :</label>
          <div class="entry"><input id="xy" type="text" /><svg class="beam" viewBox="0 0 5 16" aria-hidden="true"><path d="M0 0.500h5M0 15.500h5M2.500 1v14" stroke="#000" stroke-dasharray="1 1" /></svg></div>
          <button class="mini ringed" type="button" aria-label="Alert"><span>${glyph("alert")}</span></button>
          <div class="msg"><div>&lt;M1&gt; - Apply  ; &lt;Ctrl&gt;&lt;M1&gt; or &lt;N&gt; - Re-select second point</div><div>&lt;M2&gt; - Cancel ; &lt;Shift&gt;&lt;M1&gt; or &lt;Shift&gt;&lt;N&gt; - Re-select first point</div></div>
          <div class="unit"><select aria-label="Units"><option>MM</option><option>INCH</option></select><i class="knob"></i></div>
        </div>
        <div class="status">brd.d,#16,Line,XS=-0.1,YS=1.925,XE=-0.1,YE=48.925,r254,POS,Ang=-90</div>
      </main>
      <div class="gap"></div>
      <task-bar></task-bar>

      <pop-view></pop-view>
      <measure-popup></measure-popup>
      <div class="badge">84</div>
      <div class="tip">个性设置，点我看看</div>
      <div class="ime">
        <span>中</span>
        <svg viewBox="0 0 16 16" fill="#1e6fc0"><circle cx="4" cy="5" r="2" fill="none" stroke="#1e6fc0" stroke-width="1.500" /><path d="M10 8h4q1 4-4 6 2-2 1-3h-1z" /></svg>
        <svg viewBox="0 0 16 16" fill="none" stroke="#1e6fc0" stroke-width="1.500"><circle cx="8" cy="8" r="7" /><path d="M4 9q4 5 8 0M5.500 5v2M10.500 5v2" /></svg>
        <svg viewBox="0 0 16 16"><rect x="5" y="0" width="6" height="10" rx="3" fill="#1e6fc0" /><path d="M3 7q0 5 5 5t5-5M8 12v3M5 15h6" fill="none" stroke="#1e6fc0" stroke-width="1.500" /></svg>
        <svg viewBox="0 0 16 16"><rect x="0" y="2" width="16" height="12" rx="1" fill="#1e6fc0" /><path d="M2 5h12M2 8h12M4 11h8" stroke="#fff" stroke-width="1.500" stroke-dasharray="2 1" /></svg>
        <svg viewBox="0 0 16 16" fill="#b8c4d8"><circle cx="8" cy="4" r="3.500" /><path d="M2 15q0-7 6-7t6 7z" /><rect x="9" y="9" width="4" height="6" fill="#fff" stroke="#b8c4d8" /></svg>
        <svg viewBox="0 0 16 16" fill="#1e6fc0"><path d="M5 1q3 3 6 0l5 3-2 4-2-1v8H4V7L2 8 0 4z" /></svg>
        <svg viewBox="0 0 16 16" fill="#1e6fc0"><path d="M1 1h6v6H1zM1 9h6v6H1zM9 9h6v6H9z" /><rect x="10" y="2" width="4" height="4" fill="none" stroke="#1e6fc0" stroke-width="1.500" /></svg>
      </div>
      <svg class="sogou" viewBox="0 0 29 29"><path d="M1 5L23 1l5 22-23 5z" fill="#ee5426" /><path d="M20 8q-11-4-12 1t11 4q2 7-12 6" fill="none" stroke="#fff" stroke-width="4" /></svg>`;
  }
}
